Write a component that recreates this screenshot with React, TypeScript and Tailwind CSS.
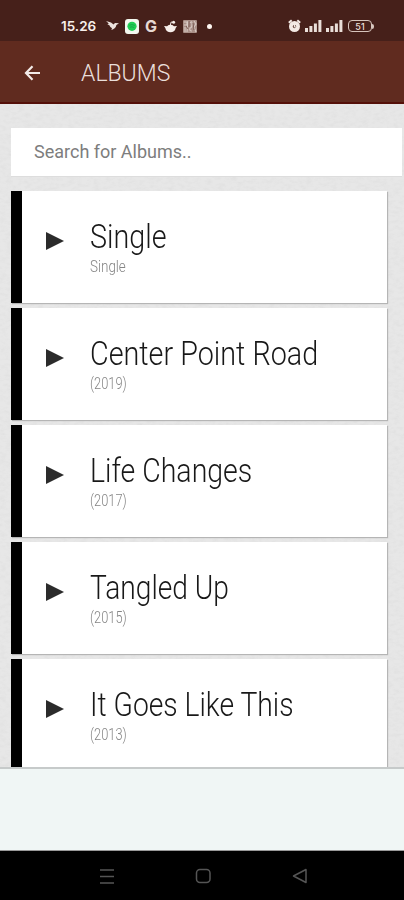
import React from "react";

const albums = [
  { title: "Single", note: "Single", titleScale: "scale-x-[0.845]", noteScale: "scale-x-[0.84]" },
  { title: "Center Point Road", note: "(2019)", titleScale: "scale-x-[0.846]", noteScale: "scale-x-[0.8]" },
  { title: "Life Changes", note: "(2017)", titleScale: "scale-x-[0.838]", noteScale: "scale-x-[0.8]" },
  { title: "Tangled Up", note: "(2015)", titleScale: "scale-x-[0.828]", noteScale: "scale-x-[0.8]" },
  { title: "It Goes Like This", note: "(2013)", titleScale: "scale-x-[0.832]", noteScale: "scale-x-[0.8]" },
];

function Signal() {
  return (
    <svg width="17" height="12" viewBox="0 0 17 12" fill="#eadfd9">
      <rect x="0" y="8" width="3" height="4" />
      <rect x="4.4" y="6" width="3" height="6" />
      <rect x="8.9" y="3.5" width="3" height="8.5" />
      <rect x="13.4" y="0" width="3" height="12" />
    </svg>
  );
}

function StatusBar() {
  return (
    <div className="flex h-[41px] shrink-0 items-start bg-[#46201a] pt-[18px] pl-[61px]">
      <div className="flex h-4 w-[152px] items-center">
        <span className="w-[45px] whitespace-nowrap font-[Inter,sans-serif] text-[13.5px] leading-4 font-semibold text-[#f7efeb]">15.26</span>
        <svg className="shrink-0" width="13" height="12" viewBox="0 0 13 12" fill="#eee4df">
          <path d="M0 1 L5 2.6 L7.5 4.6 L9 3 L13 3.3 L10.4 5.1 C9.8 8 8 9.5 5.4 10 L6 8 C4.3 7.2 3.8 6.4 3.4 5.2 L1.4 4.2 L2.8 3.5Z" />
        </svg>
        <svg className="ml-[6px] shrink-0" width="14" height="15" viewBox="0 0 14 15">
          <rect width="14" height="15" rx="3" fill="#f3f8ef" />
          <circle cx="7" cy="7.3" r="4.6" fill="#20cf54" />
          <path d="M4.3 6.2 Q7 5 9.8 6.4M4.9 8.2 Q7 7.3 9.2 8.5" stroke="#15a846" fill="none" />
        </svg>
        <span className="ml-[6px] w-[13px] font-[Inter,sans-serif] text-[16px] leading-4 font-bold text-[#e6d9d3]">G</span>
        <svg className="ml-[6px] shrink-0" width="13" height="13" viewBox="0 0 13 13" fill="#f7efeb">
          <path d="M0 6 L3 6.2 C5 4.4 8 4.4 10 6.2 L13 6 L11.7 8 C11.2 11 9 12.3 6.5 12.3 C4 12.3 1.8 11 1.3 8Z" />
          <circle cx="9.6" cy="2.3" r="1.5" />
          <path d="M6.3 5 L7.2 2 L9.6 2.5" fill="none" stroke="#f7efeb" />
        </svg>
        <svg className="ml-[6px] shrink-0" width="14" height="13" viewBox="0 0 14 13">
          <rect width="14" height="13" rx="1" fill="#a98f87" />
          <path d="M1 2H4V5H1M2 7V12M5 1L4 12M7 3Q9 0 9 4T7 8Q6 11 9 11M11 1L13 4L11 7L13 12" fill="none" stroke="#d8cac4" strokeWidth="1.1" />
          <path d="M3 6L5 9M10 3L11 10M6 1V7" stroke="#765850" strokeWidth=".9" />
        </svg>
      </div>
      <span className="mt-[5.5px] -ml-[6px] h-[5px] w-[5px] rounded-full bg-[#fff7f2]" />
      <div className="ml-[76px] flex h-4 items-center">
        <svg width="13" height="14" viewBox="0 0 13 14">
          <circle cx="6.5" cy="7.5" r="5.5" fill="#f3e9e4" />
          <path d="M.8 3.8L3.7 1.2M9.3 1.2L12.2 3.8" stroke="#f3e9e4" strokeWidth="2" />
          <circle cx="6.5" cy="7.5" r="1.7" fill="#71534b" />
          <path d="M6.5 5V8H8.5" fill="none" stroke="#f3e9e4" />
        </svg>
        <span className="ml-1"><Signal /></span>
        <span className="ml-[4px]"><Signal /></span>
        <span className="ml-[5px] flex h-3 w-6 items-center justify-center rounded-[4px] border border-[#d7c5bd] font-[Inter,sans-serif] text-[9px] leading-none font-medium text-[#eadfd9]">51</span>
        <span className="h-[5px] w-[2px] rounded-r bg-[#d7c5bd]" />
      </div>
    </div>
  );
}

export default function App() {
  return (
    <div className="flex h-[900px] w-[404px] flex-col overflow-hidden bg-[#e5e5e5]">
      <StatusBar />
      <header className="flex h-[63px] shrink-0 items-center border-b-2 border-[#541009] bg-[#602b1f] pl-6">
        <svg className="mt-[3px] shrink-0" width="17" height="16" viewBox="0 0 17 16" fill="none" stroke="#f3ebe8" strokeWidth="2.2">
          <path d="M8.5 1.3L2 8L8.5 14.7M2 8H16" />
        </svg>
        <h1 className="mt-1 ml-10 font-[Roboto,sans-serif] text-[23px] leading-8 font-light text-[#eadfdb]">ALBUMS</h1>
      </header>
      <main className="relative h-[663px] shrink-0 overflow-hidden bg-[#e7e7e7]">
        <svg className="absolute inset-0" width="404" height="663">
          <filter id="paper" x="0" y="0" width="100%" height="100%">
            <feTurbulence type="fractalNoise" baseFrequency="0.16 0.3" numOctaves="3" seed="4" />
            <feColorMatrix values="0 0 0 0 0.4  0 0 0 0 0.4  0 0 0 0 0.4  0.5 0 0 0 -0.2" />
          </filter>
          <rect width="404" height="663" filter="url(#paper)" opacity="0.4" />
        </svg>
        <div className="relative pt-6 pl-[11px]">
          <div className="flex h-[49px] w-[391px] items-center border-b border-[#ddd] bg-white pl-[23px]">
            <span className="font-[Roboto,sans-serif] text-[18px] leading-6 text-[#7d7d7d]">Search for Albums..</span>
          </div>
          <div className="mt-[14px] flex w-[376px] flex-col gap-[5px]">
            {albums.map((a) => (
              <article key={a.title} className="flex h-[112px] shrink-0 border-l-[11px] border-black bg-white shadow-[1px_1px_1px_#b5b5b5]">
                <svg className="mt-[41px] ml-6 shrink-0" width="18" height="18" viewBox="0 0 18 18"><path d="M0 0L18 9L0 18Z" fill="#2b2b2b" /></svg>
                <div className="mt-[25px] ml-[26px] whitespace-nowrap font-[Roboto,sans-serif] font-light">
                  <h2 className={"w-fit origin-left text-[34px] leading-10 text-[#181818] " + a.titleScale}>{a.title}</h2>
                  <p className={"mt-px w-fit origin-left text-[16px] leading-5 text-[#858585] " + a.noteScale}>{a.note}</p>
                </div>
              </article>
            ))}
          </div>
        </div>
      </main>
      <div className="h-[84px] shrink-0 border-t-2 border-b border-t-[#c6caca] border-b-[#999] bg-[#f0f6f5]" />
      <nav className="flex h-[49px] shrink-0 bg-black pt-[17px] pl-[99px]">
        <svg width="16" height="16" viewBox="0 0 16 16" stroke="#555" strokeWidth="1.5"><path d="M1 2H15M1 8.5H15M1 15H15" /></svg>
        <svg className="ml-[80px]" width="17" height="16" viewBox="0 0 17 16" fill="none" stroke="#555" strokeWidth="1.5"><rect x="1.5" y="1.5" width="13.5" height="13" rx="3.5" /></svg>
        <svg className="ml-[80px]" width="16" height="16" viewBox="0 0 16 16" fill="none" stroke="#555" strokeWidth="1.5" strokeLinejoin="round"><path d="M14 1.5V14.5L1.5 8Z" /></svg>
      </nav>
    </div>
  );
}
